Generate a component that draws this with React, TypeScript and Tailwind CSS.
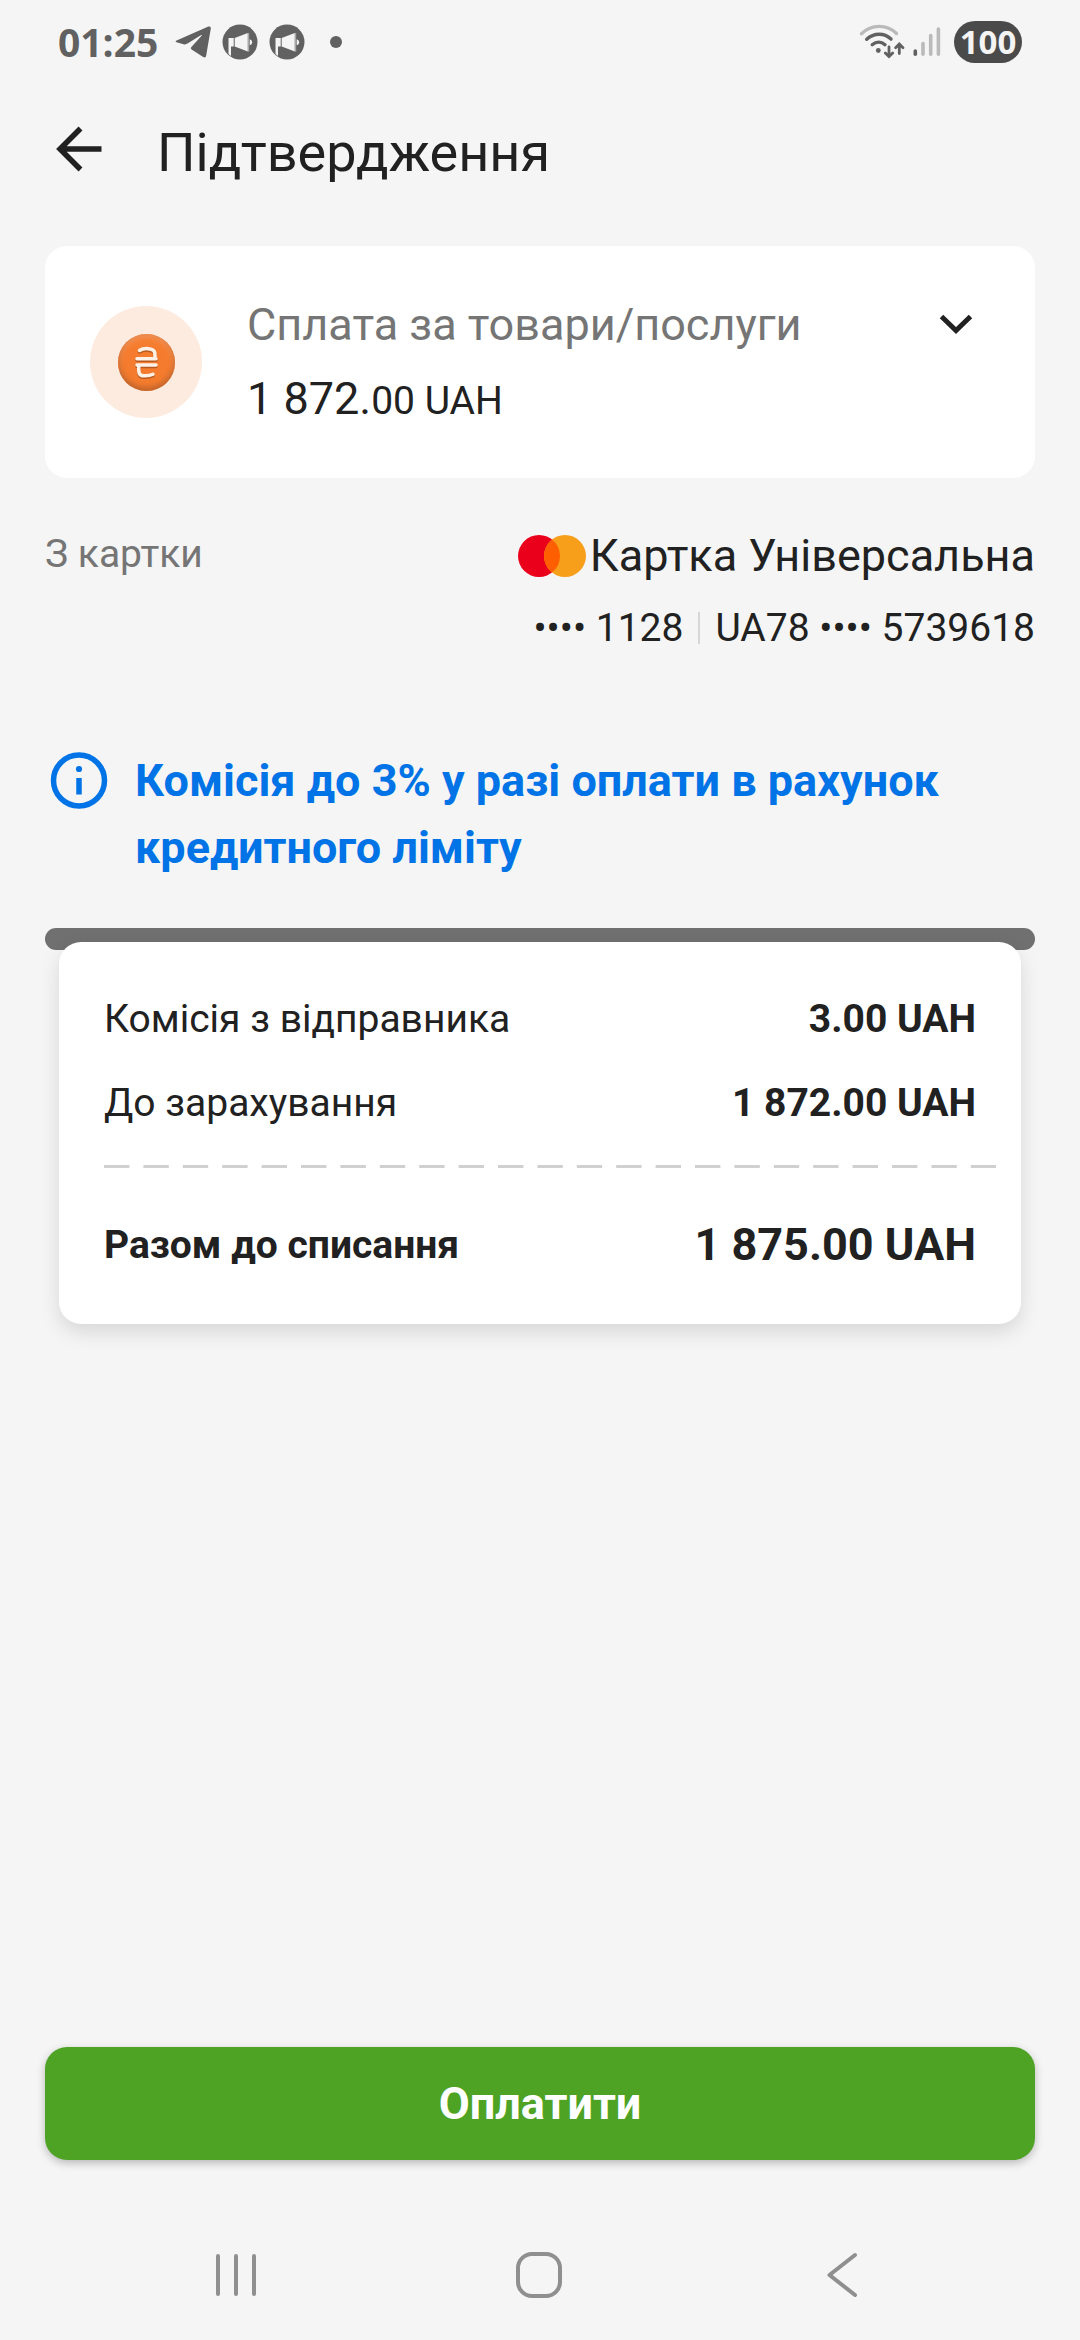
import { useState } from "react";

function TelegramIcon() {
  return (
    <svg viewBox="0 0 36 32" className="h-8 w-9 shrink-0" fill="#616161" aria-hidden="true">
      <path d="M1.6 14.6 33.4.6c1.5-.6 2.6.1 2.4 1.9l-4.6 27c-.3 2-1.500 2.500-3 1.500l-11.600-7.600c-1-.7-1-1.500-.2-2.400L26.600 9.800c.5-.6-.1-.9-.8-.5L12.500 17.600c-1.300.8-2.600 1-4 .6l-7-1.900c-1.300-.4-1.200-1.200.1-1.700Z" />
    </svg>
  );
}

function MegaphoneIcon() {
  return (
    <svg viewBox="0 0 36 36" className="size-9 shrink-0" aria-hidden="true">
      <circle cx="18" cy="18" r="17.500" fill="#616161" />
      <path d="M6.500 14h5.200v8.500H9v9.500l-2.500-2Z" fill="#f4f4f4" />
      <path d="M12.700 14 25.800 9v18.600l-13.100-5.100Z" fill="#f4f4f4" />
      <path d="M26.500 9v18.600" stroke="#a8a8a8" strokeWidth="1.400" />
      <path d="M27.700 15.300a3 3 0 0 1 0 5.900Z" fill="#f4f4f4" />
    </svg>
  );
}

function WifiIcon() {
  return (
    <svg viewBox="0 0 46 36" className="h-9 w-[46px] shrink-0" fill="none" strokeLinecap="round" aria-hidden="true">
      <path d="M2.500 9.800C12.500 0 28 0 37.500 9.500" stroke="#bababa" strokeWidth="3.400" />
      <path d="M7.700 15.300c7.300-6.700 17.500-6.700 24.300-.2" stroke="#616161" strokeWidth="3.400" />
      <path d="M13.200 20.700c4-3.300 9-3.300 12.800 0" stroke="#616161" strokeWidth="3.400" />
      <circle cx="19.300" cy="26.500" r="2.400" fill="#616161" />
      <path
        d="M30 23v9M26.300 28.900l3.700 3.700 3.700-3.700M40.300 29.500v-9M36.600 23.700l3.700-3.700 3.700 3.700"
        stroke="#616161"
        strokeWidth="2.800"
      />
    </svg>
  );
}

function SignalIcon() {
  return (
    <svg viewBox="0 0 28 32" className="h-8 w-7 shrink-0" strokeWidth="3.600" strokeLinecap="round" aria-hidden="true">
      <path d="M2.300 25v3.200" stroke="#616161" />
      <path d="M10 17.500v10.700M17.700 9.500v18.700M25.400 3v25.200" stroke="#bababa" />
    </svg>
  );
}

function StatusBar() {
  return (
    <div className="flex h-[84px] items-center justify-between px-[58px]">
      <div className="flex items-center gap-[11px]">
        <span className="mr-1.5 font-['Open_Sans',sans-serif] text-[39px] font-bold leading-[52px] text-[#616161]">
          01:25
        </span>
        <TelegramIcon />
        <MegaphoneIcon />
        <MegaphoneIcon />
        <span className="ml-[14px] size-3 rounded-full bg-[#616161]" />
      </div>
      <div className="flex items-center">
        <WifiIcon />
        <span className="ml-2">
          <SignalIcon />
        </span>
        <span className="ml-[13px] flex h-[42px] w-[68px] items-center justify-center rounded-full bg-[#4a4a4a] font-['Open_Sans',sans-serif] text-[33px] font-bold leading-[42px] text-[#f4f4f4]">
          100
        </span>
      </div>
    </div>
  );
}

function CoinIcon() {
  const strokes =
    "M21.500 16.500c3.500-2.600 14-3 15.200 2 .4 1.800.3 3.600.3 5.800M19 24.700h19M19 31h19M20.800 31.500c-.4 7.500.2 10.200 5.200 10.300 3.600.1 6.600-.3 9-1.500";

  return (
    <svg viewBox="0 0 57 57" className="size-[57px]" fill="none" strokeWidth="3.500" strokeLinecap="round" aria-hidden="true">
      <path d={strokes} stroke="#b85a20" transform="translate(0 1.500)" />
      <path d={strokes} stroke="#fff1e6" />
    </svg>
  );
}

function PaymentCard() {
  const [open, setOpen] = useState(false);

  return (
    <section className="flex items-center gap-[45px] rounded-[22px] bg-white px-[45px] py-[51px]">
      <div className="flex size-[112px] shrink-0 items-center justify-center rounded-full bg-[#feebe0]">
        <div className="rounded-full bg-[#f57c2e] shadow-[inset_0_-3px_6px_#b85f2a,inset_0_3px_6px_#f39a62]">
          <CoinIcon />
        </div>
      </div>
      <div className="flex-1">
        <div className="flex items-center justify-between">
          <h2 className="text-[45px] leading-[56px] text-[#757575]">Сплата за товари/послуги</h2>
          <button
            type="button"
            aria-label="Деталі платежу"
            aria-expanded={open}
            onClick={() => setOpen(!open)}
            className="flex h-14 w-[68px] items-center justify-center"
          >
            <svg viewBox="0 0 34 22" className="h-[22px] w-[34px]" fill="none" aria-hidden="true">
              <path d="M2.500 2.500 17 16.500l14.500-14" stroke="#212121" strokeWidth="5" />
            </svg>
          </button>
        </div>
        <p className="mt-[18px] text-[45px] leading-[56px]">
          1 872.<span className="text-[39px] leading-none">00 UAH</span>
        </p>
      </div>
    </section>
  );
}

function MastercardLogo() {
  return (
    <svg viewBox="0 0 68 42" className="h-[42px] w-[68px] shrink-0" role="img" aria-label="Mastercard">
      <circle cx="21" cy="21" r="21" fill="#eb001b" />
      <circle cx="47" cy="21" r="21" fill="#f79e1b" />
      <path d="M34 4.500a21 21 0 0 1 0 33 21 21 0 0 1 0-33Z" fill="#ff5f00" />
    </svg>
  );
}

function SourceCard() {
  return (
    <section className="mt-[50px] flex items-start justify-between">
      <span className="text-[39px] leading-[52px] text-[#757575]">З картки</span>
      <div className="flex flex-col items-end gap-[18px]">
        <div className="flex items-center gap-1">
          <MastercardLogo />
          <span className="text-[45px] leading-[56px]">Картка Універсальна</span>
        </div>
        <div className="flex items-center gap-[15px] text-[39px] leading-[52px]">
          <span>•••• 1128</span>
          <span className="h-8 w-[2px] bg-[#d6d6d6]" />
          <span>UA78 •••• 5739618</span>
        </div>
      </div>
    </section>
  );
}

function FeeNotice() {
  return (
    <section className="mt-[93px] flex items-start gap-[22px] text-[#0073e6]">
      <svg viewBox="0 0 68 67" className="h-[67px] w-[68px] shrink-0" fill="none" aria-hidden="true">
        <circle cx="34" cy="33.500" r="25.500" stroke="currentColor" strokeWidth="5.500" />
        <circle cx="34" cy="22" r="3.100" fill="currentColor" />
        <path d="M34 31v16.500" stroke="currentColor" strokeWidth="5.500" />
      </svg>
      <p className="flex-1 text-[45px] font-bold leading-[67px]">
        Комісія до 3% у разі оплати в рахунок кредитного ліміту
      </p>
    </section>
  );
}

const rows = [
  { label: "Комісія з відправника", value: "3.00 UAH" },
  { label: "До зарахування", value: "1 872.00 UAH" },
];

function Receipt() {
  return (
    <section className="mt-[47px]">
      <div className="h-[22px] rounded-full bg-[#707070]" />
      <div className="relative mx-[14px] -mt-2 rounded-[22px] bg-white px-[45px] py-[51px] shadow-[0_8px_20px_rgba(0,0,0,0.12)]">
        <dl className="flex flex-col gap-8 text-[39px] leading-[52px]">
          {rows.map((row) => (
            <div key={row.label} className="flex justify-between">
              <dt>{row.label}</dt>
              <dd className="font-bold">{row.value}</dd>
            </div>
          ))}
        </dl>
        <div className="-mr-5 mt-9">
          <svg className="block h-[3px] w-full" aria-hidden="true">
            <line x1="0" y1="1.500" x2="100%" y2="1.500" stroke="#d0d0d0" strokeWidth="3" strokeDasharray="25.4 14" />
          </svg>
        </div>
        <dl className="mt-[49px] flex items-center justify-between font-bold">
          <dt className="text-[39px] leading-[52px]">Разом до списання</dt>
          <dd className="text-[45px] leading-[56px]">1 875.00 UAH</dd>
        </dl>
      </div>
    </section>
  );
}

function SystemNav() {
  return (
    <nav className="mt-[50px] grid h-[130px] grid-cols-3 place-items-center px-[84px]">
      <button type="button" aria-label="Останні програми">
        <svg viewBox="0 0 48 48" className="size-12" stroke="#8f8f8f" strokeWidth="4" strokeLinecap="round" aria-hidden="true">
          <path d="M6 5v38M24 5v38M42 5v38" />
        </svg>
      </button>
      <button type="button" aria-label="Головний екран">
        <svg viewBox="0 0 48 48" className="size-12" fill="none" stroke="#8f8f8f" strokeWidth="4" aria-hidden="true">
          <rect x="2" y="3" width="42" height="42" rx="14" />
        </svg>
      </button>
      <button type="button" aria-label="Назад">
        <svg viewBox="0 0 48 48" className="size-12" fill="none" stroke="#8f8f8f" strokeWidth="4" strokeLinecap="round" strokeLinejoin="round" aria-hidden="true">
          <path d="M35 4 9.500 24 35 44" />
        </svg>
      </button>
    </nav>
  );
}

export default function App() {
  return (
    <div className="flex min-h-screen flex-col bg-[#f5f5f5] font-[Roboto,sans-serif] text-[#212121]">
      <StatusBar />
      <header className="flex items-start gap-11 px-[45px] pt-[37px]">
        <button type="button" aria-label="Назад" className="flex h-14 w-[68px] items-center justify-center">
          <svg viewBox="0 0 46 46" className="size-[46px]" fill="none" stroke="#212121" strokeWidth="5.500" aria-hidden="true">
            <path d="M24.500 2.500 4 23l20.500 20.500M4.500 23H45.500" />
          </svg>
        </button>
        <h1 className="text-[54px] leading-[64px]">Підтвердження</h1>
      </header>
      <main className="mt-[61px] flex flex-1 flex-col px-[45px]">
        <PaymentCard />
        <SourceCard />
        <FeeNotice />
        <Receipt />
        <button
          type="button"
          className="mt-auto h-[113px] rounded-[22px] bg-[#4ea325] text-[45px] font-bold leading-[56px] text-white shadow-[0_3px_8px_rgba(0,0,0,0.25)]"
        >
          Оплатити
        </button>
      </main>
      <SystemNav />
    </div>
  );
}
